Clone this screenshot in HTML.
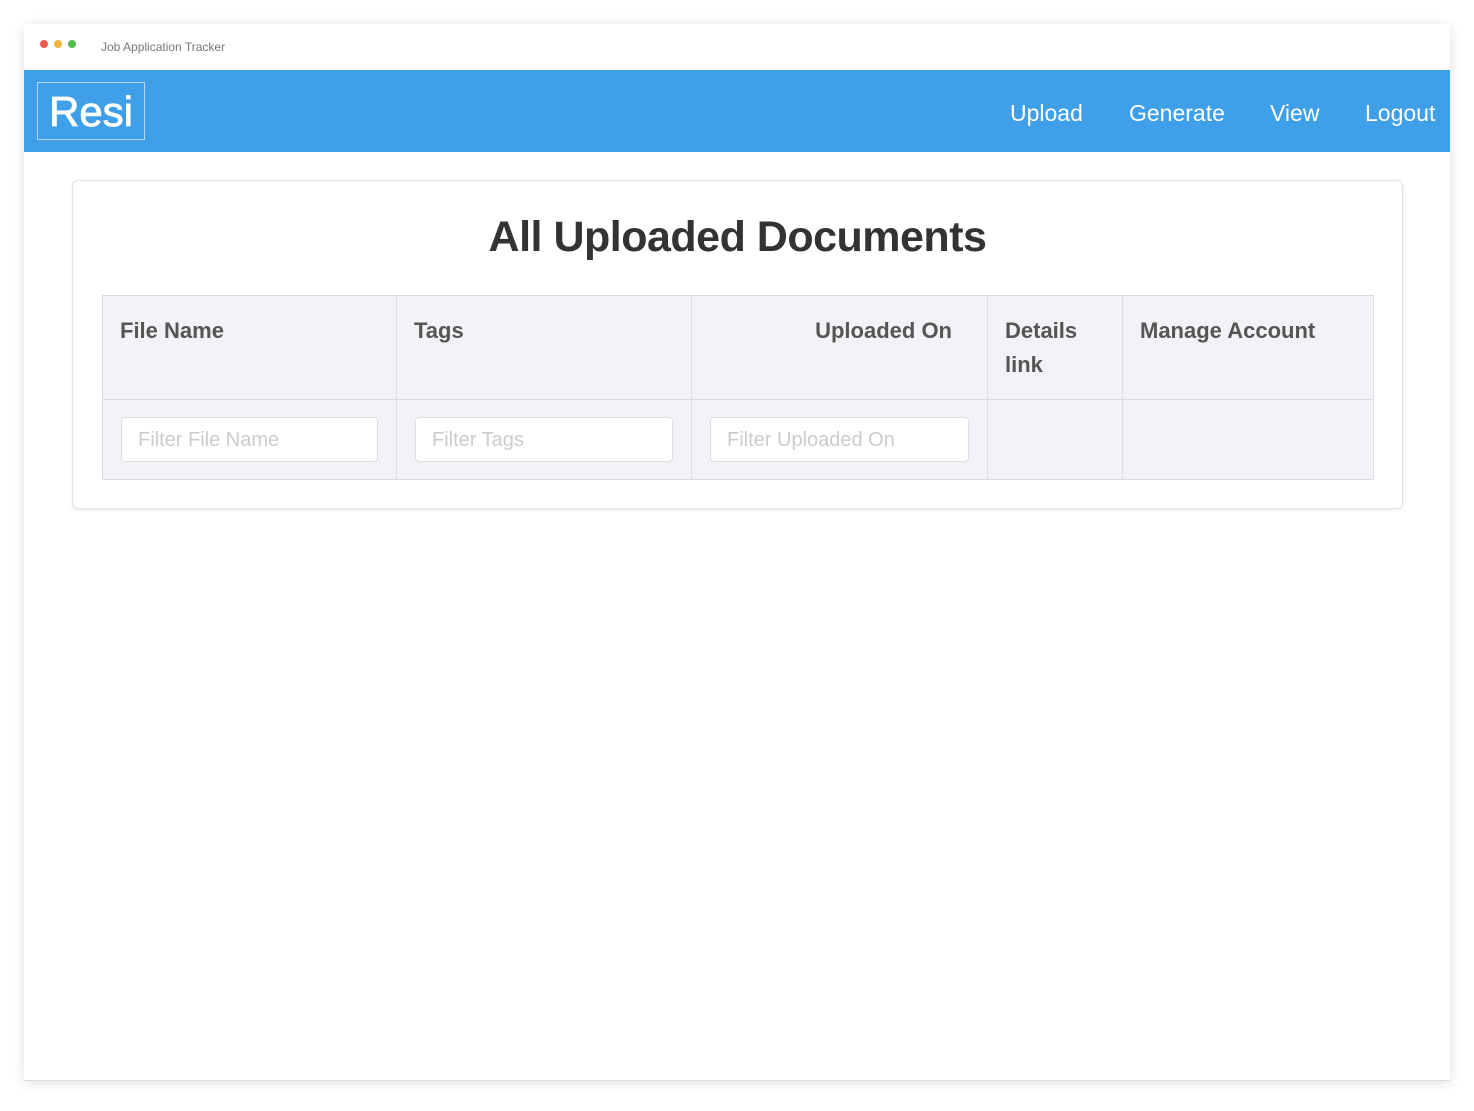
<!DOCTYPE html>
<html><head><style>
body{margin:0;width:1474px;height:1111px;background:#fff;font-family:"Liberation Sans",sans-serif;position:relative;overflow:hidden}
.win{position:absolute;left:24px;top:24px;width:1426px;height:1056px;background:#fff;box-shadow:0 2px 12px rgba(0,0,0,.12);border-bottom:1px solid #ddd}
.tb{height:46px;position:relative;border-bottom:1px solid #ddd}
.dot{position:absolute;top:16px;width:8px;height:8px;border-radius:50%}
.tt{position:absolute;left:77px;top:16px;font-size:12px;color:#777}
.nav{position:absolute;top:46px;left:0;width:1426px;height:82px;background:#3f9fe8}
.logo{position:absolute;left:13px;top:12px;width:106px;height:56px;border:1px solid rgba(255,255,255,.6);color:#fff;font-size:42px;line-height:58px;text-align:center;-webkit-text-stroke:0.8px #fff}
.nl{position:absolute;top:30px;color:#fff;font-size:23px}
.card{position:absolute;left:48px;top:156px;width:1329px;height:327px;border:1px solid #e3e3e3;border-radius:6px;box-shadow:0 1px 3px rgba(0,0,0,.1)}
h1{position:absolute;left:0;width:100%;top:32px;margin:0;text-align:center;font-size:43px;color:#333;font-weight:bold;letter-spacing:-0.5px}
table{position:absolute;left:29px;top:114px;border-collapse:collapse;background:#f2f3f6}
td{border:1px solid #dcdde2;vertical-align:top;padding:0;font-weight:bold;color:#555;font-size:22px}
.h td{height:103px}
.h td div{padding:18px 17px 0;line-height:34px}
.f td{height:79px}
.in{margin:17px 18px 0;height:43px;background:#fff;border:1px solid #ddd;border-radius:4px;font-weight:normal;color:#ccc;font-size:20px;line-height:44px;padding-left:16px}
</style></head><body>
<div class="win">
<div class="tb"><div class="dot" style="left:16px;background:#e8584f"></div><div class="dot" style="left:30px;background:#f1b43a"></div><div class="dot" style="left:44px;background:#4fbd46"></div><div class="tt">Job Application Tracker</div></div>
<div class="nav"><div class="logo">Resi</div>
<div class="nl" style="left:986px">Upload</div><div class="nl" style="left:1105px">Generate</div><div class="nl" style="left:1246px">View</div><div class="nl" style="left:1341px">Logout</div></div>
<div class="card"><h1>All Uploaded Documents</h1>
<table>
<tr class="h"><td style="width:293px"><div>File Name</div></td><td style="width:294px"><div>Tags</div></td><td style="width:295px"><div style="text-align:right;padding-right:35px">Uploaded On</div></td><td style="width:134px"><div>Details link</div></td><td style="width:250px"><div>Manage Account</div></td></tr>
<tr class="f"><td><div class="in">Filter File Name</div></td><td><div class="in">Filter Tags</div></td><td><div class="in">Filter Uploaded On</div></td><td></td><td></td></tr>
</table></div>
</div>
</body></html>
